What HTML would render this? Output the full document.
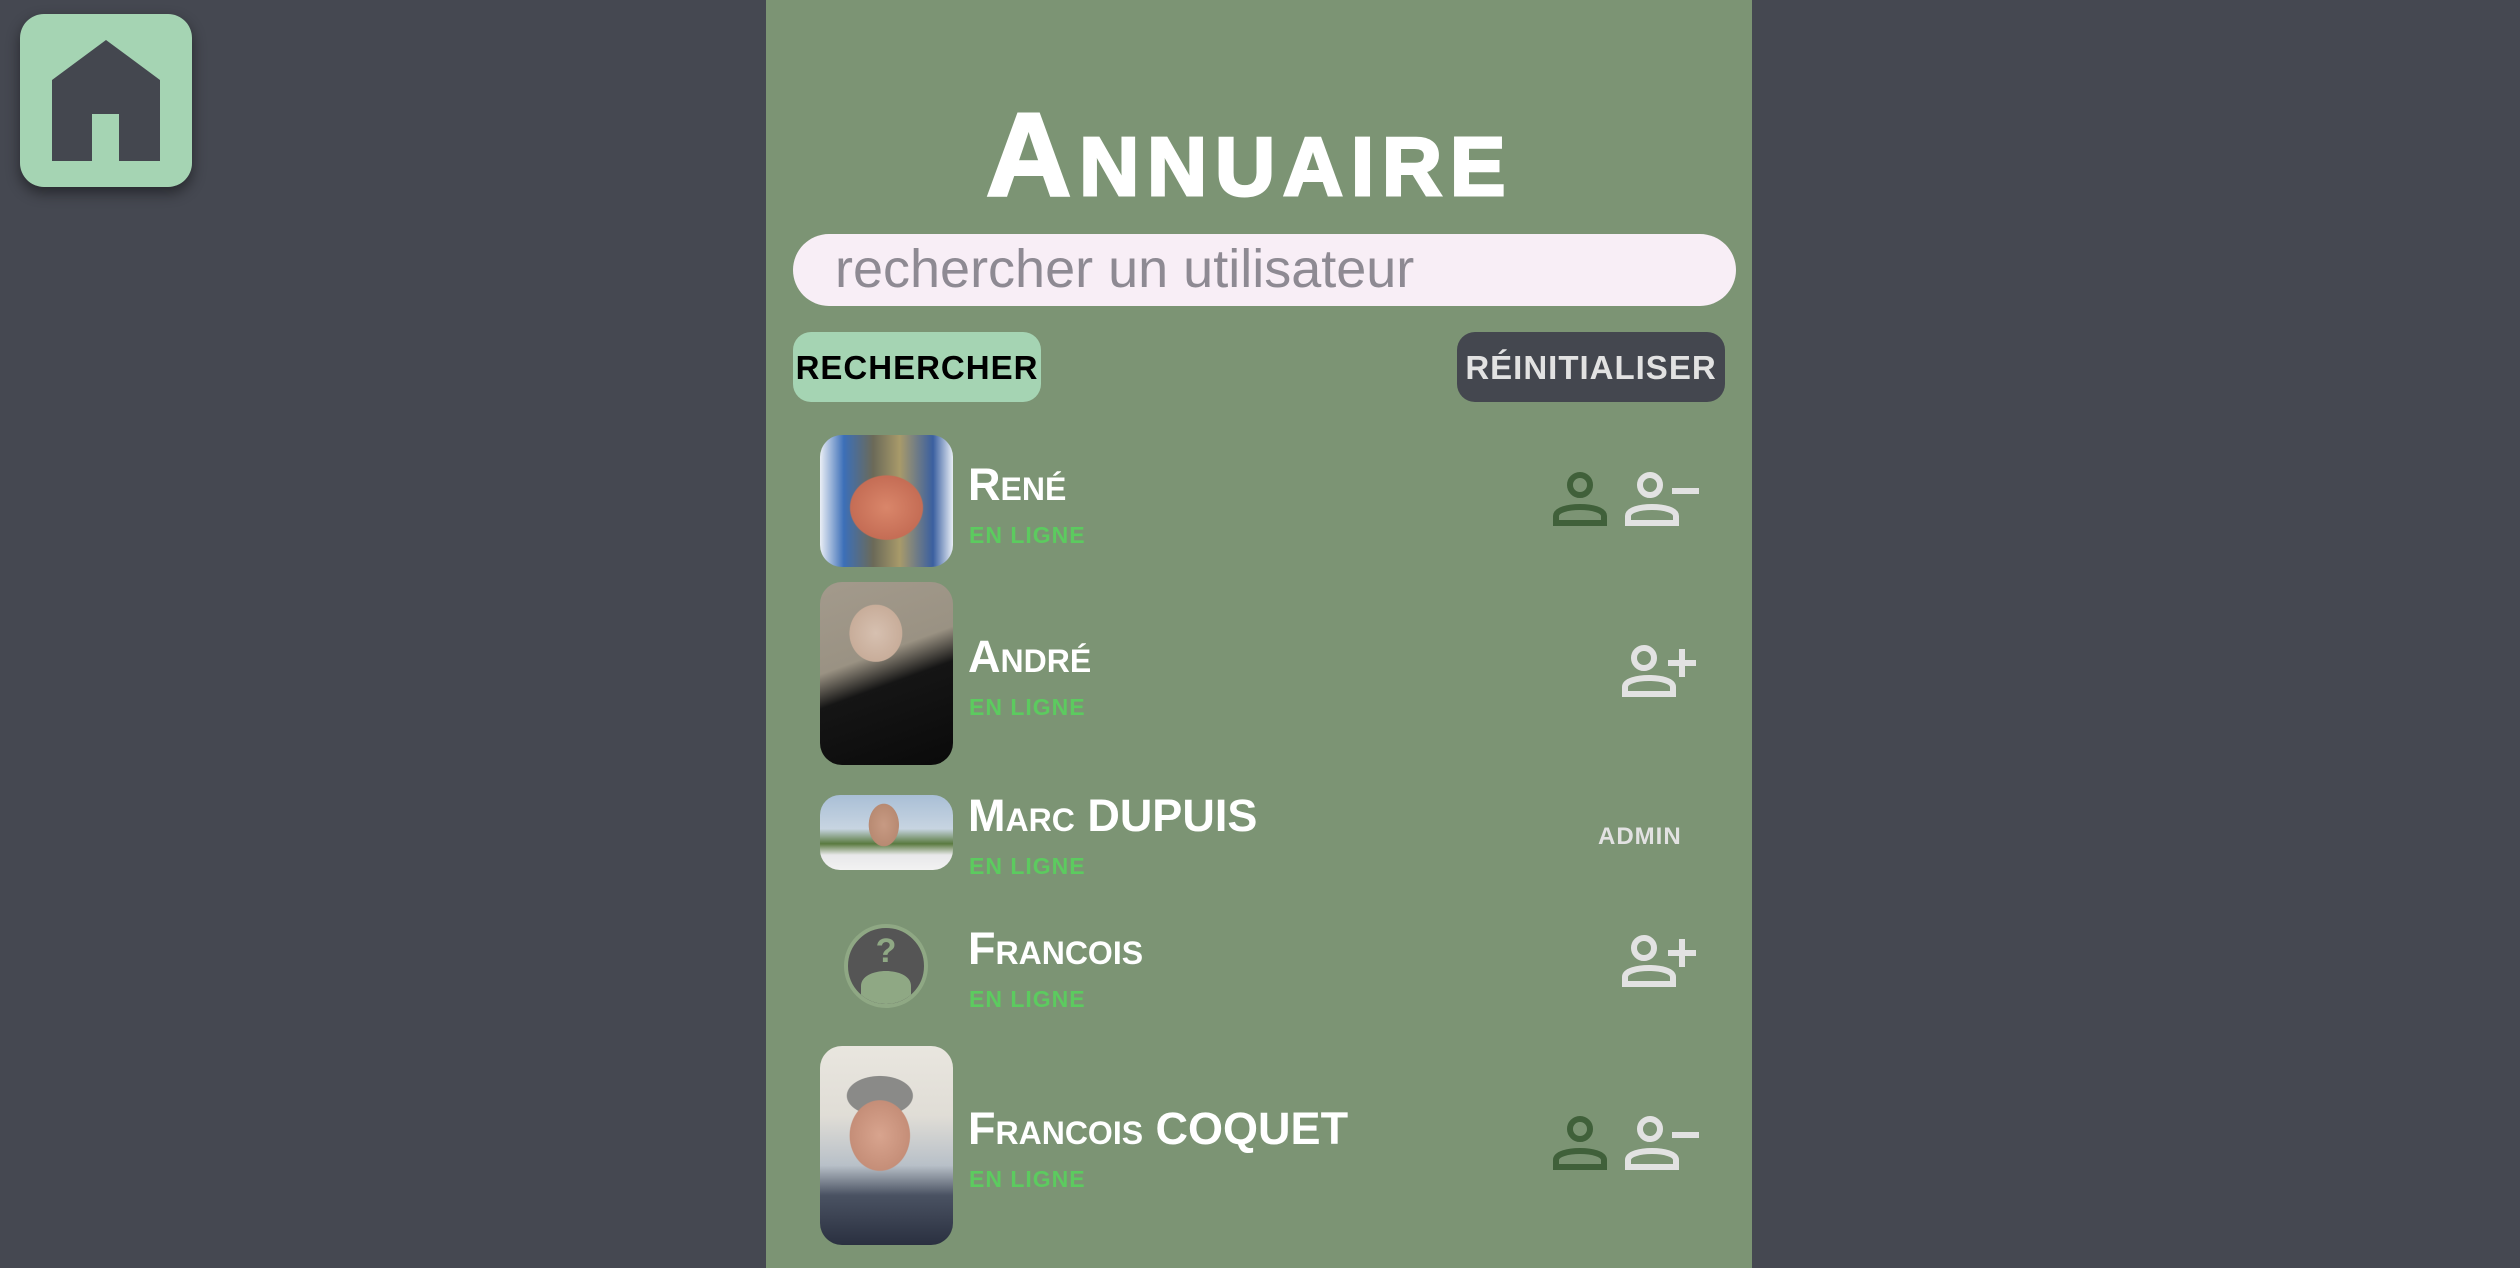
<!DOCTYPE html>
<html><head><meta charset="utf-8"><style>
*{margin:0;padding:0;box-sizing:border-box}
body{width:2520px;height:1268px;background:#454851;position:relative;overflow:hidden;font-family:"Liberation Sans",sans-serif}
.abs{position:absolute}
#panel{left:766px;top:0;width:986px;height:1268px;background:#7c9474}
.home{left:20px;top:14px;width:172px;height:173px;background:#a5d4b3;border-radius:24px;box-shadow:0 6px 14px rgba(0,0,0,.45)}
.title{left:986px;top:96px;font-size:118px;font-weight:bold;color:#fff;font-variant:small-caps;white-space:nowrap;line-height:1;letter-spacing:8px;-webkit-text-stroke:3px #fff}
.search{left:793px;top:234px;width:943px;height:72px;background:#f8eef6;border-radius:36px}
.ph{left:835px;top:237px;font-size:54px;color:#8e8a93;white-space:nowrap;line-height:64px}
.btn{height:70px;border-radius:18px;font-weight:bold;font-size:33px;line-height:72px;text-align:center;letter-spacing:1px}
.name{left:968px;font-size:45px;font-weight:bold;color:#fff;font-variant:small-caps;white-space:nowrap;line-height:1}
.on{left:969px;font-size:23px;font-weight:bold;color:#5ccb5f;white-space:nowrap;line-height:1;letter-spacing:1px}
.av{left:820px;width:133px;border-radius:22px;overflow:hidden}
</style></head><body>
<div class="abs" id="panel"></div>
<div class="abs home"><svg width="172" height="173" viewBox="0 0 172 173"><path d="M32,66 L86,26 L140,66 V147 H99 V100 H72 V147 H32 Z" fill="#44474f"/></svg></div>
<div class="abs title">Annuaire</div>
<div class="abs search"></div>
<div class="abs ph">rechercher un utilisateur</div>
<div class="abs btn" style="left:793px;top:332px;width:248px;background:#a5d4b3;color:#000">RECHERCHER</div>
<div class="abs btn" style="left:1457px;top:332px;width:268px;background:#44474f;color:#e2e2e2">RÉINITIALISER</div>

<div class="abs av" style="top:435px;height:132px;background:radial-gradient(ellipse 45% 40% at 50% 55%,#d9866a 0,#c56d55 60%,transparent 62%),linear-gradient(90deg,#eaeef5 0,#3c6fb8 18%,#6b6a58 40%,#a89a6a 60%,#3a5fa0 85%,#e8eef6 100%)"></div>
<div class="abs av" style="top:582px;height:183px;background:radial-gradient(ellipse 28% 22% at 42% 28%,#d6c0b0 0,#c8ad9a 70%,transparent 72%),linear-gradient(160deg,#a39a8c 0,#9a9283 40%,#151515 55%,#0a0a0a 100%)"></div>
<div class="abs av" style="top:795px;height:75px;border-radius:20px;background:radial-gradient(ellipse 16% 40% at 48% 40%,#c79a83 0,#b88a72 70%,transparent 72%),linear-gradient(180deg,#a9bfd6 0,#c7d4e1 45%,#5a7a40 65%,#e8e8ea 80%,#f2f2f2 100%)"></div>
<svg class="abs" style="left:844px;top:924px" width="84" height="84" viewBox="0 0 84 84"><circle cx="42" cy="42" r="40" fill="#555" stroke="#8fa884" stroke-width="4"/><clipPath id="c"><circle cx="42" cy="42" r="38"/></clipPath><path d="M17,84 V62 C17,42 67,42 67,62 V84 Z" fill="#8fa884" clip-path="url(#c)"/><text x="42" y="38" font-family="Liberation Sans" font-weight="bold" font-size="34" fill="#8fa884" text-anchor="middle">?</text></svg>
<div class="abs av" style="top:1046px;height:199px;background:radial-gradient(ellipse 32% 25% at 45% 45%,#d8a48e 0,#c58e78 70%,transparent 72%),radial-gradient(ellipse 35% 14% at 45% 25%,#8a8a88 0,#8a8a88 70%,transparent 72%),linear-gradient(180deg,#e9e6df 0,#e0ddd6 35%,#b8c0c8 60%,#4a5262 75%,#2a3040 100%)"></div>

<div class="abs name" style="top:462px">René</div>
<div class="abs on" style="top:524px">EN LIGNE</div>
<div class="abs name" style="top:634px">André</div>
<div class="abs on" style="top:696px">EN LIGNE</div>
<div class="abs name" style="top:793px">Marc DUPUIS</div>
<div class="abs on" style="top:855px">EN LIGNE</div>
<div class="abs name" style="top:926px">Francois</div>
<div class="abs on" style="top:988px">EN LIGNE</div>
<div class="abs name" style="top:1106px">Francois COQUET</div>
<div class="abs on" style="top:1168px">EN LIGNE</div>
<div class="abs" style="left:1598px;top:823px;font-size:24px;font-weight:bold;color:#e2e2e2;letter-spacing:1px">ADMIN</div>

<svg class="abs" style="left:1553px;top:471px" width="60" height="60"><circle cx="27" cy="14" r="10" fill="none" stroke="#40603a" stroke-width="6"/><path d="M3,52 V45 C3,33 51,33 51,45 V52 Z" fill="none" stroke="#40603a" stroke-width="6"/></svg>
<svg class="abs" style="left:1625px;top:471px" width="80" height="60"><circle cx="25" cy="14" r="10" fill="none" stroke="#e2e2e2" stroke-width="6"/><path d="M3,52 V45 C3,33 51,33 51,45 V52 Z" fill="none" stroke="#e2e2e2" stroke-width="6"/><rect x="47" y="17" width="27" height="6" fill="#e2e2e2"/></svg>
<svg class="abs" style="left:1622px;top:644px" width="80" height="60"><circle cx="22" cy="14" r="10" fill="none" stroke="#e2e2e2" stroke-width="6"/><path d="M3,50 V43 C3,31 51,31 51,43 V50 Z" fill="none" stroke="#e2e2e2" stroke-width="6"/><rect x="46" y="16" width="28" height="6" fill="#e2e2e2"/><rect x="57" y="5" width="6" height="28" fill="#e2e2e2"/></svg>
<svg class="abs" style="left:1622px;top:934px" width="80" height="60"><circle cx="22" cy="14" r="10" fill="none" stroke="#e2e2e2" stroke-width="6"/><path d="M3,50 V43 C3,31 51,31 51,43 V50 Z" fill="none" stroke="#e2e2e2" stroke-width="6"/><rect x="46" y="16" width="28" height="6" fill="#e2e2e2"/><rect x="57" y="5" width="6" height="28" fill="#e2e2e2"/></svg>
<svg class="abs" style="left:1553px;top:1115px" width="60" height="60"><circle cx="27" cy="14" r="10" fill="none" stroke="#40603a" stroke-width="6"/><path d="M3,52 V45 C3,33 51,33 51,45 V52 Z" fill="none" stroke="#40603a" stroke-width="6"/></svg>
<svg class="abs" style="left:1625px;top:1115px" width="80" height="60"><circle cx="25" cy="14" r="10" fill="none" stroke="#e2e2e2" stroke-width="6"/><path d="M3,52 V45 C3,33 51,33 51,45 V52 Z" fill="none" stroke="#e2e2e2" stroke-width="6"/><rect x="47" y="17" width="27" height="6" fill="#e2e2e2"/></svg>
</body></html>
